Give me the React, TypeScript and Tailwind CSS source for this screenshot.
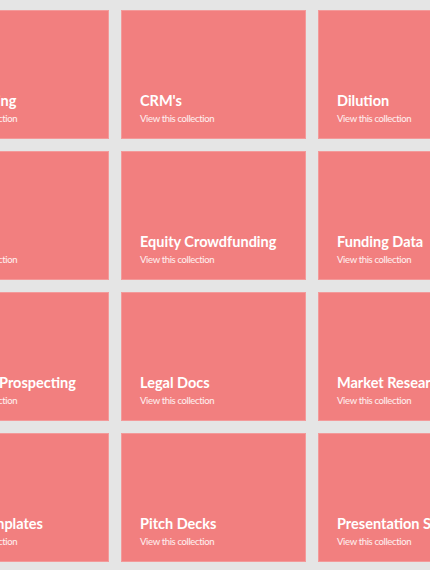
import React from "react";

const rows: string[][] = [
  ["Accounting", "CRM's", "Dilution"],
  ["Email", "Equity Crowdfunding", "Funding Data"],
  ["Investor Prospecting", "Legal Docs", "Market Research"],
  ["NDA Templates", "Pitch Decks", "Presentation Software"],
];

export default function App() {
  return (
    <div
      className="w-[430px] h-[570px] overflow-hidden bg-[#e5e5e5]"
      style={{ fontFamily: "Lato, 'Noto Sans', sans-serif" }}
    >
      <div className="ml-[-76px] pt-[10px] grid grid-cols-[repeat(3,185px)] auto-rows-[129px] gap-x-[12px] gap-y-[12px] w-max">
        {rows.flat().map((t, i) => (
          <div
            key={i}
            className="bg-[#f27f7f] border border-[#f39a9a] flex flex-col justify-end pl-[18px] pb-[13px]"
          >
            <div className="text-white font-bold text-[14.5px] leading-[17px] whitespace-nowrap">{t}</div>
            <div className="text-white/90 text-[9.5px] tracking-[-0.35px] leading-[12px] mt-[4px] whitespace-nowrap">
              View this collection
            </div>
          </div>
        ))}
      </div>
    </div>
  );
}
